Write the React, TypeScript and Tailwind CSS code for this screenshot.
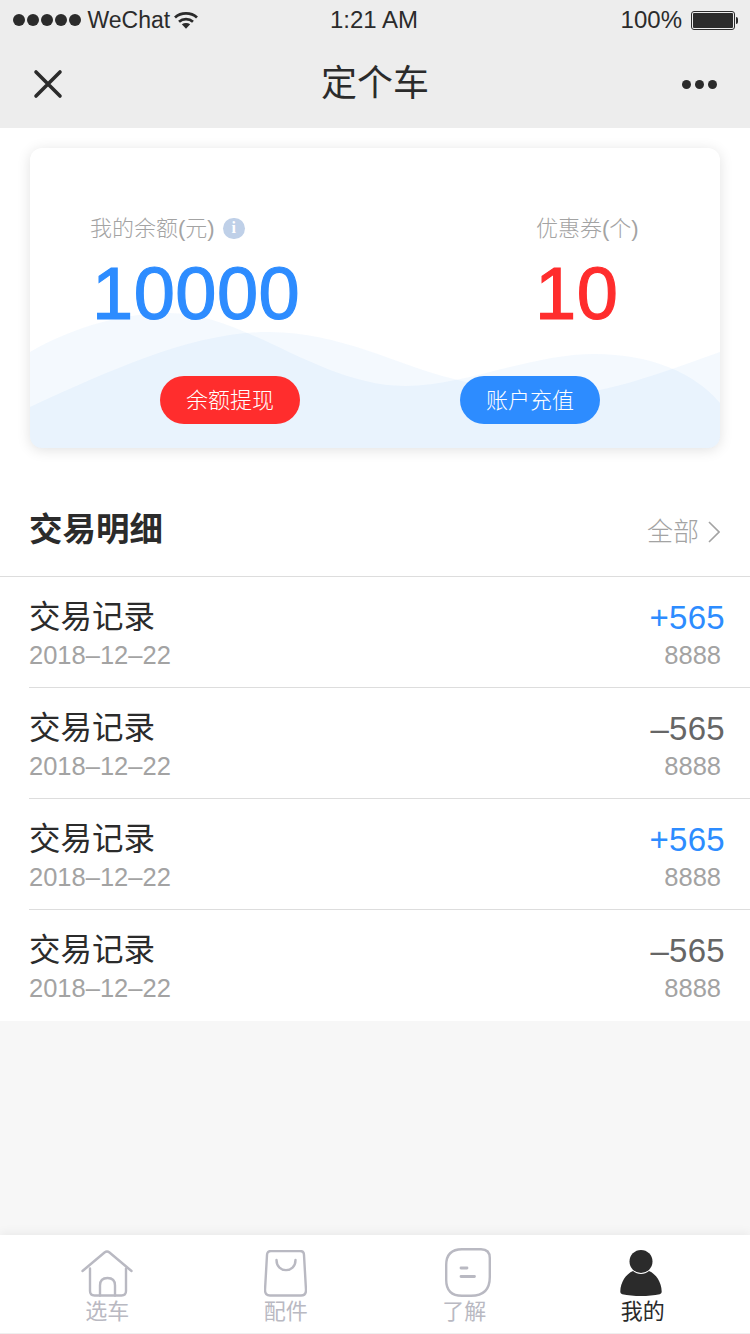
import React from "react";

const sans = "font-['Liberation_Sans','Noto_Sans_CJK_SC',sans-serif]";

const records = [
  { amount: "+565", income: true },
  { amount: "–565", income: false },
  { amount: "+565", income: true },
  { amount: "–565", income: false },
];

function StatusBar() {
  return (
    <div className="h-10 flex items-center justify-between pl-[13px] pr-[12px] text-[24px] text-[#2b2b2b] relative">
      <div className="flex items-center">
        <div className="flex gap-[2.5px]">
          {[0, 1, 2, 3, 4].map((i) => (
            <span key={i} className="w-[11.5px] h-[11.5px] rounded-full bg-[#2b2b2b]" />
          ))}
        </div>
        <span className="ml-[7px] text-[23px]">WeChat</span>
        <svg width="24" height="18" viewBox="0 0 24 18" className="ml-[4px]" fill="none" stroke="#2b2b2b" strokeWidth="2.800">
          <path d="M1 6.500C7 1 17 1 23 6.500" />
          <path d="M5 10.700c4-3.400 10-3.400 14 0" />
          <path d="M12 17.800l-4.200-4.500c2.400-1.700 6-1.700 8.400 0z" fill="#2b2b2b" stroke="none" />
        </svg>
      </div>
      <span className="absolute left-[330px]">1:21 AM</span>
      <div className="flex items-center">
        <span>100%</span>
        <div className="ml-[9px] w-[44px] h-[19px] border border-[#2b2b2b] rounded-[3px] p-[1px]">
          <div className="w-full h-full bg-[#2b2b2b] rounded-[1px]" />
        </div>
        <div className="ml-[1px] w-[2px] h-[7px] bg-[#2b2b2b] rounded-r-[2px]" />
      </div>
    </div>
  );
}

function NavBar() {
  return (
    <div className="h-[88px] grid grid-cols-3 items-center px-[33px]">
      <svg width="30" height="30" viewBox="0 0 30 30" stroke="#2b2b2b" strokeWidth="3.600" strokeLinecap="round">
        <path d="M3 3l24 24M27 3L3 27" />
      </svg>
      <span className="text-[36px] text-center text-[#2b2b2b]">定个车</span>
      <div className="flex justify-end gap-[4px]">
        {[0, 1, 2].map((i) => (
          <span key={i} className="w-[9px] h-[9px] rounded-full bg-[#2b2b2b]" />
        ))}
      </div>
    </div>
  );
}

function BalanceCard() {
  return (
    <div className="relative h-[300px] rounded-[12px] bg-white overflow-hidden shadow-[0_2px_14px_rgba(0,0,0,0.12)]">
      <svg className="absolute inset-0" width="690" height="300" viewBox="0 0 690 300">
        <path
          d="M0 204C45 178 95 165 139 165C215 165 290 238 375 238C435 238 500 206 565 206C620 206 665 225 690 255V300H0Z"
          fill="#2f82ea"
          fillOpacity="0.05"
        />
        <path
          d="M0 259C85 220 165 184 239 184C310 184 370 218 420 230C450 237 480 249 510 249C570 249 630 225 690 204V300H0Z"
          fill="#2f82ea"
          fillOpacity="0.05"
        />
      </svg>
      <div className="relative flex flex-col h-full">
        <div className="flex pt-[65px] pl-[60px]">
          <div className="w-[446px]">
            <div className="flex items-center h-[30px] text-[22px] font-light text-[#a3a3a3]">
              <span>我的余额(元)</span>
              <span className="ml-[8px] w-[22px] h-[21px] rounded-full bg-[#bfd0e8] flex items-center justify-center text-white text-[16px] font-bold font-['Liberation_Serif',serif]">
                i
              </span>
            </div>
            <div className="mt-[14px] ml-[2px] text-[74px] leading-[74px] tracking-[0.5px] text-[#2d8cff] [-webkit-text-stroke:1.2px_#2d8cff] font-['Liberation_Sans',sans-serif]">
              10000
            </div>
          </div>
          <div>
            <div className="h-[30px] flex items-center text-[22px] font-light text-[#a3a3a3]">优惠券(个)</div>
            <div className="mt-[14px] ml-[-1px] text-[74px] leading-[74px] tracking-[0.5px] text-[#ff2d2d] [-webkit-text-stroke:1.2px_#ff2d2d] font-['Liberation_Sans',sans-serif]">
              10
            </div>
          </div>
        </div>
        <div className="flex pt-[45px] pl-[130px] gap-[160px]">
          <button className="w-[140px] h-[48px] rounded-full bg-[#ff2d2d] text-white text-[22px] font-light">余额提现</button>
          <button className="w-[140px] h-[48px] rounded-full bg-[#2d8cff] text-white text-[22px] font-light">账户充值</button>
        </div>
      </div>
    </div>
  );
}

function RecordRow({ amount, income, last }: { amount: string; income: boolean; last: boolean }) {
  return (
    <div className={`ml-[29px] h-[111px] flex justify-between pr-[25px] ${last ? "" : "border-b border-[#dddddd]"}`}>
      <div className="pt-[20px]">
        <div className="text-[31.5px] leading-[40px] text-[#2b2b2b]">交易记录</div>
        <div className="text-[25.5px] leading-[30px] mt-[3px] text-[#a3a3a3]">2018–12–22</div>
      </div>
      <div className="pt-[21px] flex flex-col items-end">
        <div className={`text-[33px] leading-[40px] tracking-[0.3px] ${income ? "text-[#2d8cff]" : "text-[#666666]"}`}>{amount}</div>
        <div className="text-[25.5px] leading-[30px] mt-[2px] mr-[4px] text-[#a3a3a3]">8888</div>
      </div>
    </div>
  );
}

function HomeIcon() {
  return (
    <svg width="54" height="47" viewBox="0 0 54 47" fill="none" stroke="#b9b9c2" strokeWidth="2.400" strokeLinecap="round" strokeLinejoin="round">
      <path d="M2.500 21L24.500 2.500Q27 0.600 29.500 2.500L51.500 21" />
      <path d="M10 18.500V41q0 4.500 4.500 4.500h27q4.500 0 4.500-4.500V18.500" />
      <path d="M20 45.500V35.500q0-7.500 7.500-7.500t7.500 7.500v10" />
    </svg>
  );
}

function BagIcon() {
  return (
    <svg width="43" height="47" viewBox="0 0 43 47" fill="none" stroke="#b9b9c2" strokeWidth="2.400" strokeLinecap="round" strokeLinejoin="round">
      <path d="M3 5q0-4 4-4h29q4 0 4 4l2 35q0 5.500-5 5.500H6q-5 0-5-5.500z" />
      <path d="M12.500 10c0 13.500 19 13.500 19 0" />
    </svg>
  );
}

function FaceIcon() {
  return (
    <svg width="46" height="49" viewBox="0 0 46 49" className="ml-[8px]" fill="none" stroke="#b9b9c2" strokeWidth="2.400" strokeLinecap="round">
      <path d="M17 1.200h19q8.800 0 8.800 8.800V29q0 18.800-18.800 18.800H17q-15.800 0-15.800-15.800V17Q1.200 1.200 17 1.200z" />
      <path d="M16 20h6M16 28.500h13.500" strokeWidth="2.800" />
    </svg>
  );
}

function PersonIcon() {
  return (
    <svg width="42" height="47" viewBox="0 0 42 47" className="mr-[4px]" fill="#2b2b2b">
      <ellipse cx="21" cy="11.500" rx="11.500" ry="11.500" />
      <path d="M13 21C6 24 0.500 32 0.300 41.500c0 1.500.7 2.300 2 2.700 11 2.400 26.400 2.400 37.400 0 1.300-.4 2-1.200 2-2.700C41.500 32 36 24 29 21c-4.500 4-11.500 4-16 0z" />
    </svg>
  );
}

const tabs = [
  { label: "选车", icon: <HomeIcon />, active: false },
  { label: "配件", icon: <BagIcon />, active: false },
  { label: "了解", icon: <FaceIcon />, active: false },
  { label: "我的", icon: <PersonIcon />, active: true },
];

function TabBar() {
  return (
    <div className="h-[99px] bg-white border-b border-[#efefef] grid grid-cols-4 px-[18px] shadow-[0_-2px_10px_rgba(0,0,0,0.06)]">
      {tabs.map((t) => (
        <div key={t.label} className="flex flex-col items-center">
          <div className="h-[62px] flex items-end">{t.icon}</div>
          <span className={`mt-[1px] text-[22px] leading-[28px] ${t.active ? "text-[#2b2b2b]" : "text-[#b9b9c2]"}`}>{t.label}</span>
        </div>
      ))}
    </div>
  );
}

export default function App() {
  return (
    <div className={`w-[750px] h-[1334px] flex flex-col bg-[#f7f7f7] overflow-hidden ${sans}`}>
      <div className="bg-[#ededed]">
        <StatusBar />
        <NavBar />
      </div>
      <div className="bg-white">
        <div className="px-[30px] pt-[20px]">
          <BalanceCard />
        </div>
        <div className="h-[129px] flex items-center justify-between pl-[29px] pr-[30px] border-b border-[#dddddd] pt-[34px]">
          <span className="mt-[2px] text-[33.5px] font-bold text-[#2b2b2b]">交易明细</span>
          <div className="mt-[6px] flex items-center text-[26px] font-light text-[#a3a3a3]">
            <span>全部</span>
            <svg width="12" height="22" viewBox="0 0 12 22" className="ml-[9px]" fill="none" stroke="#a3a3a3" strokeWidth="1.600">
              <path d="M1 1l10 10L1 21" />
            </svg>
          </div>
        </div>
        {records.map((r, i) => (
          <RecordRow key={i} amount={r.amount} income={r.income} last={i === records.length - 1} />
        ))}
      </div>
      <div className="flex-1" />
      <TabBar />
    </div>
  );
}
